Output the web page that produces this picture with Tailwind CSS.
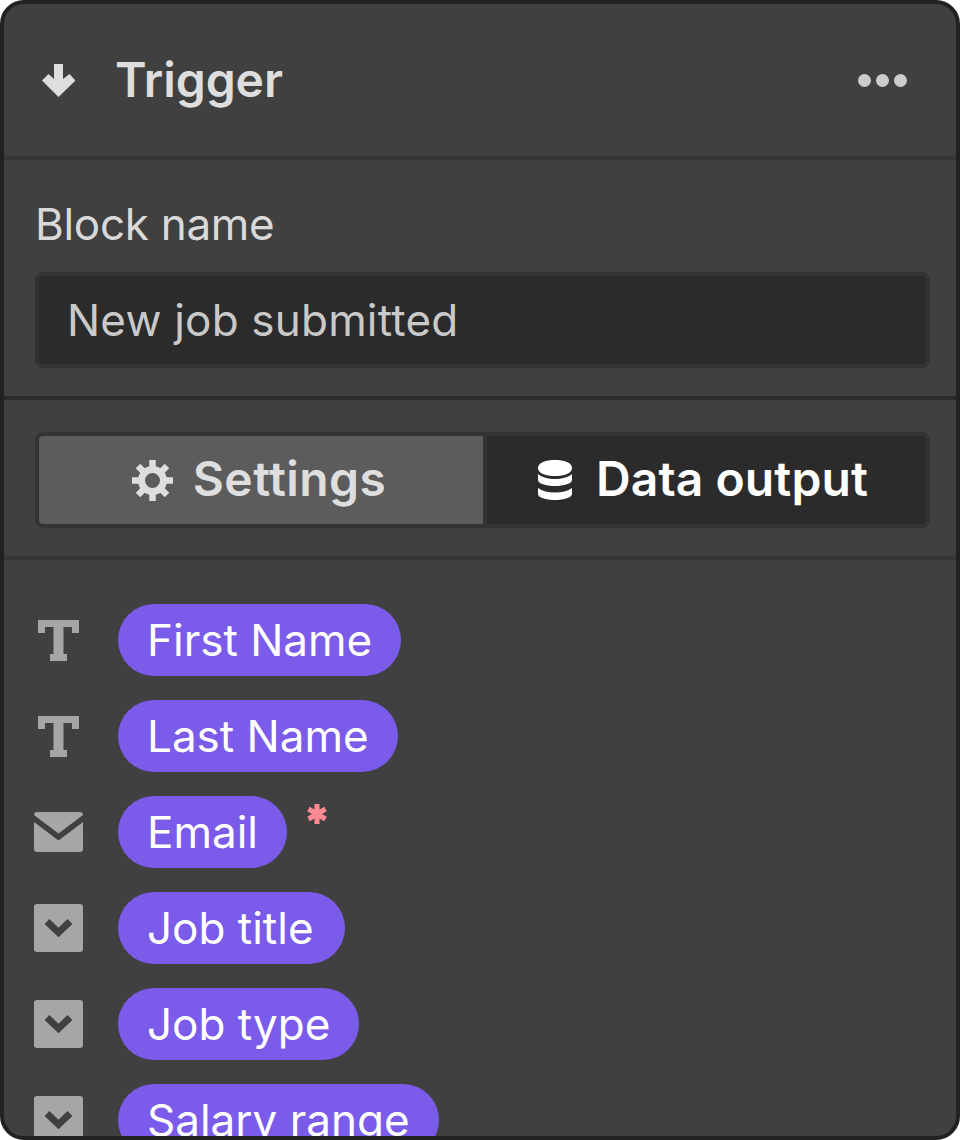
<!doctype html>
<html lang="en">
  <head>
    <meta charset="utf-8">
    <title>Trigger</title>
    <script src="https://cdn.jsdelivr.net/npm/@tailwindcss/browser@4"></script>
  </head>
  <body class="bg-white font-['Inter',sans-serif]">
    <div class="w-[960px] h-[1140px] border-4 border-[#212121] rounded-[24px] bg-[#404040] overflow-hidden flex flex-col">
      <header class="h-[156px] shrink-0 flex items-center pl-[38px] pr-[49px] border-b-4 border-[#353535]">
        <svg class="w-[33px] h-[33px] text-[#dedede]" viewBox="0 0 33 33" fill="currentColor">
          <path d="M12 0h9v15l6.500-5 6 6.500L16.500 33 0 16.500 6.500 10l5.500 5z" />
        </svg>
        <h1 class="ml-[40px] text-[48px] leading-none font-semibold text-[#dedede] tracking-[-0.1px]">Trigger</h1>
        <div class="ml-auto flex gap-[5px]">
          <span class="w-[13px] h-[13px] rounded-full bg-[#cccccc]"></span>
          <span class="w-[13px] h-[13px] rounded-full bg-[#cccccc]"></span>
          <span class="w-[13px] h-[13px] rounded-full bg-[#cccccc]"></span>
        </div>
      </header>

      <section class="h-[240px] shrink-0 pl-[31px] pr-[26px] border-b-4 border-[#2b2b2b]">
        <label class="block mt-[40px] h-[48px] text-[44px] leading-[48px] text-[#d9d9d9] tracking-[-0.3px]">Block name</label>
        <div class="mt-[24px] h-[96px] flex items-center px-[28px] bg-[#2b2b2b] border-4 border-[#333333] rounded-[8px] text-[44px] text-[#c9c9c9] tracking-[0.2px]">New job submitted</div>
      </section>

      <section class="h-[160px] shrink-0 pl-[31px] pr-[26px] pt-[32px] border-b-4 border-[#353535]">
        <div class="h-[96px] flex border-4 border-[#333333] rounded-[8px] bg-[#2b2b2b] overflow-hidden">
          <div class="w-[448px] flex items-center justify-center gap-[20px] pr-[4px] bg-[#5c5c5c] border-r-4 border-[#333333] text-[#dedede]">
            <svg class="w-[41px] h-[41px]" viewBox="-20.500 -20.500 41 41" fill="none" stroke="currentColor">
              <circle r="11" stroke-width="7" />
              <path stroke-width="6.500" d="M0-13v-7.500M0 13v7.500M-13 0h-7.500M13 0h7.500M-9.500-9.500l-5-5M9.500-9.500l5-5M-9.500 9.500l-5 5M9.500 9.500l5 5" />
            </svg>
            <span class="mb-[2px] text-[48px] font-semibold leading-none tracking-[0.4px]">Settings</span>
          </div>
          <div class="flex-1 flex items-center justify-center gap-[24px] pr-[7px] text-white">
            <svg class="w-[34px] h-[40px]" viewBox="0 0 34 40" fill="currentColor">
              <path d="M17 0c9 0 17 2.500 17 8s-8 8-17 8S0 13.500 0 8 8 0 17 0z" />
              <path d="M0 14c4 3.500 10 5 17 5s13-1.500 17-5v6c0 3.500-8 6-17 6S0 23.500 0 20z" />
              <path d="M0 28c4 3 10 4.500 17 4.500S30 31 34 28v6c0 3.500-8 6-17 6S0 37.500 0 34z" />
            </svg>
            <span class="mb-[2px] text-[48px] font-semibold leading-none tracking-[0.1px]">Data output</span>
          </div>
        </div>
      </section>

      <ul class="pt-[44px] pl-[29.5px] flex flex-col gap-[24px]">
        <li class="flex items-center h-[72px] shrink-0">
          <span class="w-[50px] flex justify-center">
            <svg class="w-[41px] h-[41px] text-[#a6a6a6]" viewBox="0 0 41 41" fill="currentColor"><path d="M0 0h41v13h-7V7H25.500v27H29v7H12v-7h3.500V7H7v6H0z" /></svg>
          </span>
          <span class="ml-[34.5px] h-[72px] px-[29px] flex items-center rounded-full bg-[#7b5cea] text-[44px] text-white">First Name</span>
        </li>
        <li class="flex items-center h-[72px] shrink-0">
          <span class="w-[50px] flex justify-center">
            <svg class="w-[41px] h-[41px] text-[#a6a6a6]" viewBox="0 0 41 41" fill="currentColor"><path d="M0 0h41v13h-7V7H25.500v27H29v7H12v-7h3.500V7H7v6H0z" /></svg>
          </span>
          <span class="ml-[34.5px] h-[72px] px-[29px] flex items-center rounded-full bg-[#7b5cea] text-[44px] text-white">Last Name</span>
        </li>
        <li class="flex items-center h-[72px] shrink-0">
          <span class="w-[50px] flex justify-center">
            <svg class="w-[49px] h-[40px] text-[#a6a6a6]" viewBox="0 0 49 40"><rect width="49" height="40" rx="3" fill="currentColor" /><path d="M-2 5l26.500 20L51 5" fill="none" stroke="#404040" stroke-width="5.500" /></svg>
          </span>
          <span class="ml-[34.5px] h-[72px] px-[29px] flex items-center rounded-full bg-[#7b5cea] text-[44px] text-white">Email</span>
          <svg class="ml-[20px] mb-[36px] w-[20px] h-[20px] text-[#ff8a94]" viewBox="0 0 20 20" fill="none" stroke="currentColor" stroke-width="5"><path d="M10 0v20M1.500 5l17 10M18.500 5l-17 10" /></svg>
        </li>
        <li class="flex items-center h-[72px] shrink-0">
          <span class="w-[50px] flex justify-center">
            <svg class="w-[49px] h-[48px] text-[#a6a6a6]" viewBox="0 0 49 48"><rect width="49" height="48" rx="3" fill="currentColor" /><path d="M13 17.500l11.500 11 11.500-11" fill="none" stroke="#404040" stroke-width="7" /></svg>
          </span>
          <span class="ml-[34.5px] h-[72px] pl-[29px] pr-[31px] flex items-center rounded-full bg-[#7b5cea] text-[44px] text-white">Job title</span>
        </li>
        <li class="flex items-center h-[72px] shrink-0">
          <span class="w-[50px] flex justify-center">
            <svg class="w-[49px] h-[48px] text-[#a6a6a6]" viewBox="0 0 49 48"><rect width="49" height="48" rx="3" fill="currentColor" /><path d="M13 17.500l11.500 11 11.500-11" fill="none" stroke="#404040" stroke-width="7" /></svg>
          </span>
          <span class="ml-[34.5px] h-[72px] px-[29px] flex items-center rounded-full bg-[#7b5cea] text-[44px] text-white">Job type</span>
        </li>
        <li class="flex items-center h-[72px] shrink-0">
          <span class="w-[50px] flex justify-center">
            <svg class="w-[49px] h-[48px] text-[#a6a6a6]" viewBox="0 0 49 48"><rect width="49" height="48" rx="3" fill="currentColor" /><path d="M13 17.500l11.500 11 11.500-11" fill="none" stroke="#404040" stroke-width="7" /></svg>
          </span>
          <span class="ml-[34.5px] h-[72px] px-[29px] flex items-center rounded-full bg-[#7b5cea] text-[44px] text-white">Salary range</span>
        </li>
      </ul>
    </div>
  </body>
</html>
